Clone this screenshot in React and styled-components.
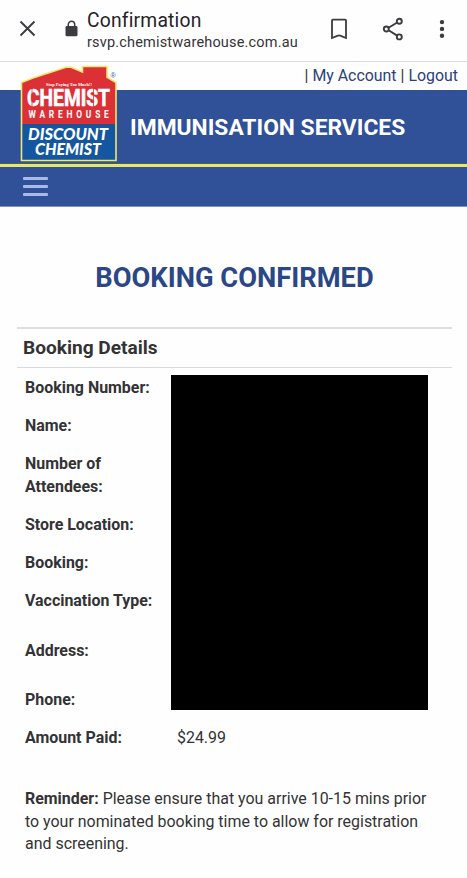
import React from "react";
import styled, { createGlobalStyle } from "styled-components";

const GlobalStyle = createGlobalStyle`
  * { box-sizing: border-box; }
  body {
    margin: 0;
    background: #fefefe;
    color: #333335;
    font-family: Roboto, "Liberation Sans", sans-serif;
  }
`;

const Page = styled.div`
  width: 467px;
  height: 878px;
  overflow: hidden;
  display: flex;
  flex-direction: column;
`;

const BrowserBar = styled.header`
  height: 62px;
  flex: none;
  display: flex;
  align-items: flex-start;
  border-bottom: 1px solid #dcdcde;
  color: #3c3c40;
`;

const Glyph = styled.svg`
  display: block;
  flex: none;
  width: ${(p) => p.$w}px;
  height: ${(p) => p.$h}px;
  margin-top: ${(p) => p.$top}px;
  margin-left: ${(p) => p.$left}px;
`;

const PageInfo = styled.div`
  width: 230.5px;
  margin: 9px 0 0 9.5px;
  display: flex;
  flex-direction: column;
  white-space: nowrap;
`;

const PageTitle = styled.span`
  font-size: 19.3px;
  line-height: 24px;
  letter-spacing: 0.2px;
  color: #242427;
`;

const PageUrl = styled.span`
  font-size: 14.5px;
  line-height: 20px;
  letter-spacing: 0.18px;
  color: #343437;
`;

const AccountRow = styled.div`
  height: 28px;
  flex: none;
  display: flex;
  justify-content: flex-end;
  gap: 4px;
  padding-right: 9px;
  font-size: 15.9px;
  line-height: 28px;
  white-space: nowrap;
`;

const AccountLink = styled.a`
  color: #2b4278;
`;

const Banner = styled.div`
  height: 77px;
  flex: none;
  display: flex;
  align-items: flex-start;
  padding-left: 20px;
  background: #305198;
  border-bottom: 3px solid #e9e76a;
  box-shadow: inset 0 -1px #48604f;
`;

const Logo = styled.svg`
  width: 100px;
  height: 98px;
  flex: none;
  margin-top: -26px;
`;

const BannerTitle = styled.h1`
  margin: 24px 0 0 10px;
  font-size: 22.8px;
  line-height: 28px;
  font-weight: 700;
  color: #fff;
  white-space: nowrap;
`;

const NavBar = styled.nav`
  height: 40px;
  flex: none;
  padding: 10px 0 0 23px;
  background: #305198;
  border-bottom: 1px solid #8093bc;
`;

const MenuButton = styled.button`
  width: 25px;
  padding: 0;
  border: 0;
  background: none;
  display: flex;
  flex-direction: column;
  gap: 5px;
`;

const MenuLine = styled.span`
  width: 25px;
  height: 3px;
  border-radius: 1px;
  background: #a9baea;
`;

const Main = styled.main`
  padding: 0 15px 0 17px;
`;

const Heading = styled.h2`
  margin: 53px 0 0;
  height: 67px;
  font-size: 27.3px;
  line-height: 36px;
  font-weight: 700;
  text-align: center;
  color: #2b4785;
  white-space: nowrap;
`;

const SectionTitle = styled.h3`
  margin: 0;
  height: 41px;
  padding-left: 6px;
  border-top: 2px solid #dedede;
  border-bottom: 1px solid #dadada;
  font-size: 19.1px;
  line-height: 37px;
  font-weight: 700;
`;

const Details = styled.div`
  display: grid;
  grid-template-columns: 146px 257px;
  grid-template-rows: 38px 38.5px 60.5px 38px 38px 38.5px 61px 37.5px 38.5px;
  padding: 1px 0 0 8px;
  font-size: 15.95px;
  line-height: 22.5px;
`;

const Label = styled.div`
  grid-column: 1;
  align-self: center;
  font-weight: 700;
  white-space: pre-line;
`;

const Redaction = styled.div`
  grid-column: 2;
  grid-row: 1 / 9;
  margin: 6px 0 9px;
  background: #000;
`;

const Amount = styled.div`
  grid-column: 2;
  grid-row: 9;
  align-self: center;
  padding-left: 6px;
`;

const Reminder = styled.p`
  margin: 30.5px 0 0 8px;
  font-size: 15.95px;
  line-height: 22.5px;
  white-space: pre-line;
`;

const labels = [
  "Booking Number:",
  "Name:",
  "Number of\nAttendees:",
  "Store Location:",
  "Booking:",
  "Vaccination Type:",
  "Address:",
  "Phone:",
  "Amount Paid:",
];

function StoreLogo() {
  return (
    <Logo viewBox="0 0 100 98" role="img" aria-label="Chemist Warehouse">
      <path d="M1.5 96.5V18.5L13 14 46 3.3h5L62.5 8V2.5H87v10.7L96 18.5v78Z" fill="#db3036" />
      <path d="M2 60h94v36H2z" fill="#1457a0" />
      <path d="M1.5 96.5V18.5L13 14 46 3.3h5L62.5 8V2.5H87v10.7L96 18.5v78Z" fill="none" stroke="#f0e76c" strokeWidth="1.6" />
      <g fill="#fff">
        <text x="26" y="21.5" fontSize="4.4" fontWeight="700" fontFamily="Liberation Serif, serif" textLength="46" lengthAdjust="spacingAndGlyphs">Stop Paying Too Much!!</text>
        <text x="7" y="41.6" fontSize="23" fontWeight="700" fontFamily="Roboto, sans-serif" stroke="#fff" strokeWidth="0.6" textLength="83" lengthAdjust="spacingAndGlyphs">CHEMIST</text>
        <path d="M12 24v19M73.5 24v19" stroke="#db3036" strokeWidth="0.8" />
        <g transform="translate(8.5 53.9) scale(.78 1)">
          <text fontSize="10.8" fontWeight="700" fontFamily="Roboto, sans-serif" textLength="103">WAREHOUSE</text>
        </g>
        <text x="8" y="76.3" fontSize="16" fontWeight="900" fontStyle="italic" fontFamily="Lato, sans-serif" textLength="80" lengthAdjust="spacingAndGlyphs">DISCOUNT</text>
        <text x="15" y="90.7" fontSize="16" fontWeight="900" fontStyle="italic" fontFamily="Lato, sans-serif" textLength="66" lengthAdjust="spacingAndGlyphs">CHEMIST</text>
      </g>
      <text x="90.5" y="14" fontSize="7" fill="#365b99" fontFamily="Liberation Sans, sans-serif">®</text>
    </Logo>
  );
}

export default function App() {
  return (
    <>
      <GlobalStyle />
      <Page>
        <BrowserBar>
          <Glyph $w={17} $h={17} $top={20} $left={19} viewBox="0 0 17 17">
            <path d="m1.5 1.5 14 14m0-14-14 14" stroke="currentColor" strokeWidth="1.9" fill="none" />
          </Glyph>
          <Glyph $w={13} $h={17} $top={20} $left={28.5} viewBox="0 0 13 17">
            <path d="M3.3 7V4.5a3.2 3.2 0 0 1 6.4 0V7" stroke="currentColor" strokeWidth="1.5" fill="none" />
            <rect x="0.5" y="6" width="12" height="10.3" rx="1.4" fill="currentColor" />
          </Glyph>
          <PageInfo>
            <PageTitle>Confirmation</PageTitle>
            <PageUrl>rsvp.chemistwarehouse.com.au</PageUrl>
          </PageInfo>
          <Glyph $w={18} $h={22} $top={18} $left={12} viewBox="0 0 18 22">
            <path d="M2 20V2.5q0-.8.8-.8h12.4q.8 0 .8.8V20l-5.2-2.2q-1.8-.7-3.6 0Z" stroke="currentColor" strokeWidth="1.8" fill="none" />
          </Glyph>
          <Glyph $w={23} $h={25} $top={17} $left={34} viewBox="0 0 23 25">
            <g stroke="currentColor" strokeWidth="1.9" fill="none">
              <path d="m6.6 10.7 8.2-4.9m-8.2 7.5 8.2 5.1" />
              <circle cx="4.3" cy="12" r="2.5" />
              <circle cx="17.3" cy="4.3" r="2.5" />
              <circle cx="17.3" cy="19.9" r="2.5" />
            </g>
          </Glyph>
          <Glyph $w={6} $h={20} $top={19} $left={34} viewBox="0 0 6 20">
            <g fill="currentColor">
              <circle cx="3" cy="3.1" r="2.2" />
              <circle cx="3" cy="9.9" r="2.2" />
              <circle cx="3" cy="16.7" r="2.2" />
            </g>
          </Glyph>
        </BrowserBar>
        <AccountRow>
          <span>|</span>
          <AccountLink>My Account</AccountLink>
          <span>|</span>
          <AccountLink>Logout</AccountLink>
        </AccountRow>
        <Banner>
          <StoreLogo />
          <BannerTitle>IMMUNISATION SERVICES</BannerTitle>
        </Banner>
        <NavBar>
          <MenuButton aria-label="Menu">
            <MenuLine />
            <MenuLine />
            <MenuLine />
          </MenuButton>
        </NavBar>
        <Main>
          <Heading>BOOKING CONFIRMED</Heading>
          <SectionTitle>Booking Details</SectionTitle>
          <Details>
            {labels.map((label) => (
              <Label key={label}>{label}</Label>
            ))}
            <Redaction />
            <Amount>$24.99</Amount>
          </Details>
          <Reminder>
            <b>Reminder:</b>
            {" Please ensure that you arrive 10-15 mins prior\nto your nominated booking time to allow for registration\nand screening."}
          </Reminder>
        </Main>
      </Page>
    </>
  );
}
